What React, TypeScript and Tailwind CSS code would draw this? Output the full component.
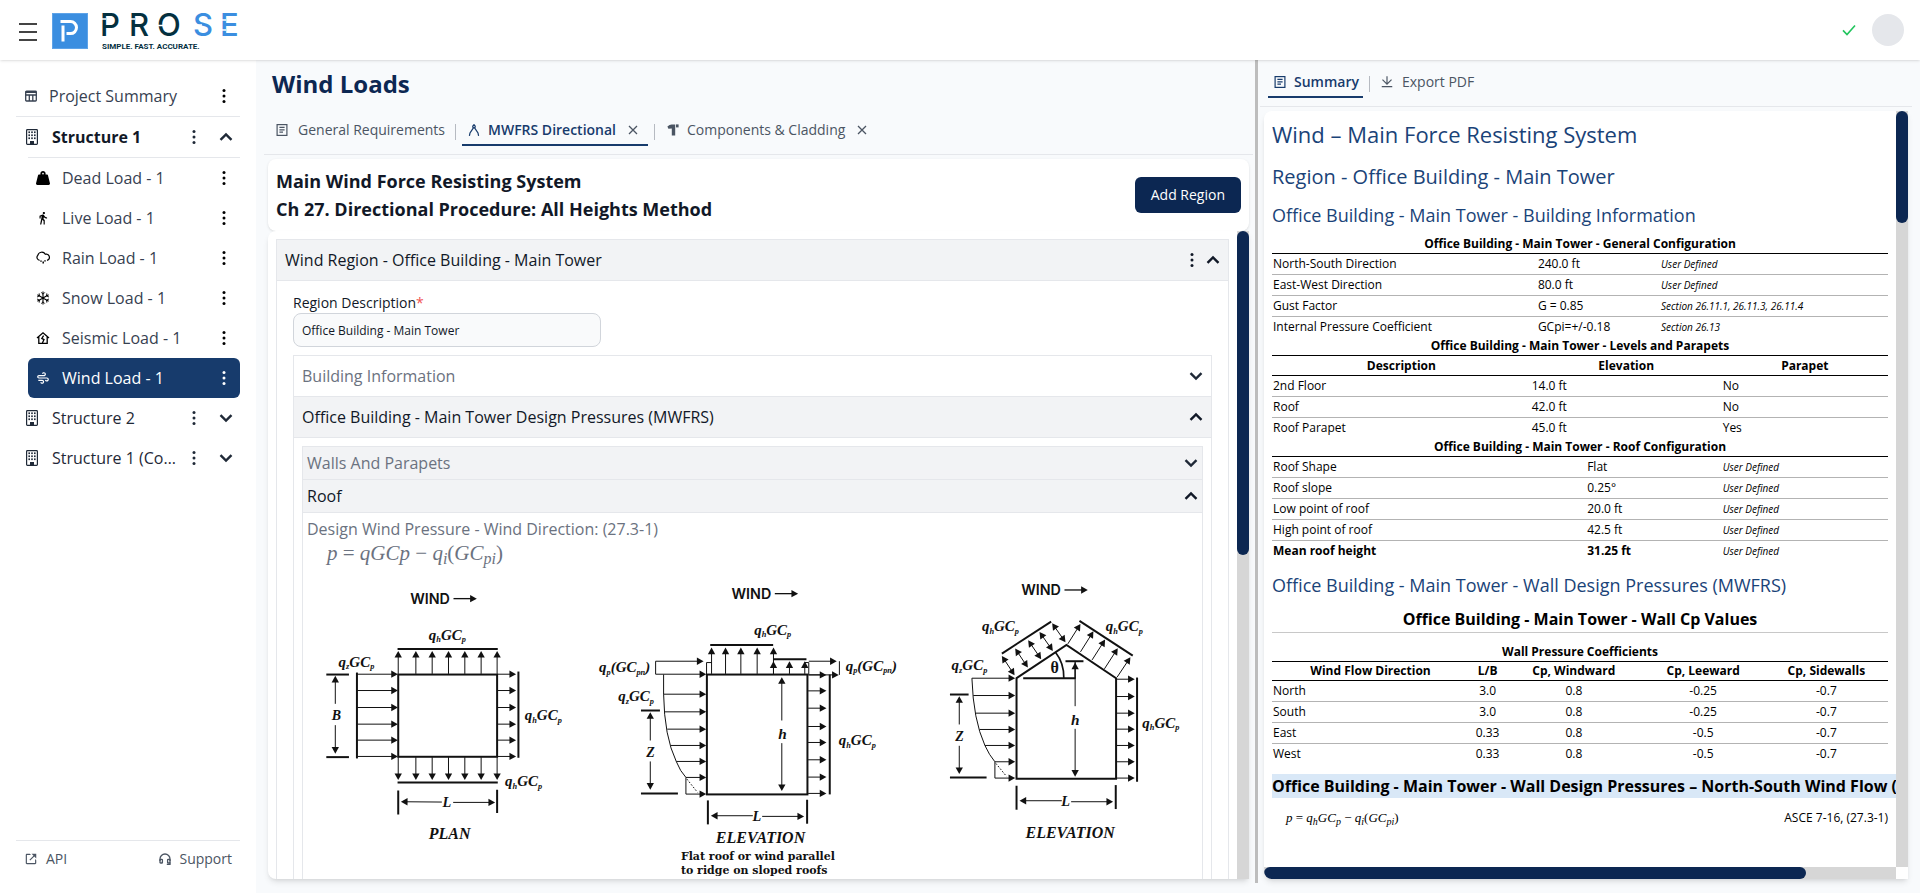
import React from "react";
import { FaWeightHanging } from "react-icons/fa";
import { MdDirectionsWalk } from "react-icons/md";
import { BiLinkExternal } from "react-icons/bi";
import { RiWindyLine, RiDownloadLine } from "react-icons/ri";

/* ---------- icons ---------- */

function Kebab({ className = "" }: { className?: string }) {
  return (
    <svg viewBox="0 0 4 16" className={"h-4 w-1 shrink-0 " + className} fill="currentColor">
      <circle cx="2" cy="2.5" r="1.5" />
      <circle cx="2" cy="8" r="1.5" />
      <circle cx="2" cy="13.5" r="1.5" />
    </svg>
  );
}

function Chevron({ up = false }: { up?: boolean }) {
  return (
    <svg viewBox="0 0 14 14" className="size-3.5 shrink-0" fill="none" stroke="currentColor" strokeWidth="2.4">
      <path d={up ? "M1.5 9.8 L7 4.4 L12.5 9.8" : "M1.5 4.2 L7 9.6 L12.5 4.2"} />
    </svg>
  );
}

function TableIcon() {
  return (
    <svg viewBox="0 0 12 12" className="size-3 shrink-0" fill="none" stroke="currentColor" strokeWidth="1.3">
      <rect x="0.7" y="1.2" width="10.6" height="9.8" rx="0.8" />
      <path d="M0.7 2 H11.3" strokeWidth="2" />
      <path d="M0.7 5 H11.3 M4.3 5 V11 M7.8 5 V11" />
    </svg>
  );
}

function BuildingIcon() {
  return (
    <svg viewBox="0 0 12 16" className="h-4 w-3 shrink-0" fill="currentColor">
      <rect x="0.6" y="0.6" width="10.8" height="14.8" rx="0.8" fill="none" stroke="currentColor" strokeWidth="1.2" />
      {[3, 6, 9].map((y) => [2.4, 5.2, 8].map((x) => <rect key={x + "-" + y} x={x} y={y - 0.6} width="1.6" height="1.7" />))}
      <rect x="4" y="12" width="4" height="3.6" />
    </svg>
  );
}

function RainIcon() {
  return (
    <svg viewBox="0 0 14 14" className="size-3.5 shrink-0" fill="none" stroke="currentColor" strokeWidth="1.2">
      <path d="M3.6 9.3 A2.9 2.9 0 0 1 1.8 4.4 A4.1 4.1 0 0 1 9.3 3.2 A3.2 3.2 0 0 1 11 9.4" />
      <path d="M5 9.4 v1.4 M7.2 10.6 v1.8 M9 9.2 v1.4" strokeWidth="1.5" />
    </svg>
  );
}

function SnowIcon() {
  return (
    <svg viewBox="0 0 14 14" className="size-3.5 shrink-0" fill="none" stroke="currentColor" strokeWidth="1.1">
      <path d="M7 0.6 V13.4 M1.4 3.8 L12.6 10.2 M12.6 3.8 L1.4 10.2" />
      <path d="M5.2 1.4 L7 3.2 L8.8 1.4 M5.2 12.6 L7 10.8 L8.8 12.6 M1 6 L3.4 5 L3.2 2.4 M13 8 L10.6 9 L10.8 11.6 M13 6 L10.6 5 L10.8 2.4 M1 8 L3.4 9 L3.2 11.6" strokeWidth="0.9" />
    </svg>
  );
}

function SeismicIcon() {
  return (
    <svg viewBox="0 0 14 14" className="size-3.5 shrink-0" fill="none" stroke="currentColor" strokeWidth="1.3">
      <path d="M1 7 L7 1.8 L13 7 M2.8 6 V12.3 H11.2 V6" />
      <path d="M7.6 4.6 L5.8 7.4 L8 8.6 L6.4 12" />
    </svg>
  );
}

function DocIcon() {
  return (
    <svg viewBox="0 0 12 12" className="size-3 shrink-0" fill="none" stroke="currentColor" strokeWidth="1.2">
      <rect x="1.1" y="0.6" width="9.8" height="10.8" />
      <path d="M3.4 3.4 H8.6 M3.4 5.8 H8.6 M3.4 8.2 H7" />
    </svg>
  );
}

function CompassIcon() {
  return (
    <svg viewBox="0 0 12 12" className="size-3 shrink-0" fill="none" stroke="currentColor" strokeWidth="1.2">
      <circle cx="6" cy="2.6" r="1.3" />
      <path d="M6 0 V1.3 M5.4 3.8 L2 9 L1.4 11.8 M6.6 3.8 L10 9 L10.6 11.8" />
    </svg>
  );
}

function CladdingIcon() {
  return (
    <svg viewBox="0 0 12 12" className="size-3 shrink-0" fill="currentColor">
      <path d="M0.4 2.6 Q2.6 0.4 4.6 0.4 H8.2 V11.6 H4.8 V4.4 L1.4 4.8 Z" />
      <path d="M9 0.4 H11.6 V3.4 H9 Z" />
    </svg>
  );
}

function HeadsetIcon() {
  return (
    <svg viewBox="0 0 12 12" className="size-3 shrink-0" fill="none" stroke="currentColor" strokeWidth="1.3">
      <path d="M1 8 V6 A5 5 0 0 1 11 6 V8" />
      <rect x="1" y="6.4" width="2.4" height="3.6" rx="0.6" />
      <rect x="8.6" y="6.4" width="2.4" height="3.6" rx="0.6" />
      <path d="M11 9.6 V11.4 H7.8" />
    </svg>
  );
}

function CloseIcon() {
  return (
    <svg viewBox="0 0 10 10" className="size-2.5" fill="none" stroke="currentColor" strokeWidth="1.3">
      <path d="M1 1 L9 9 M9 1 L1 9" />
    </svg>
  );
}

function Logo() {
  return (
    <svg viewBox="0 -8 200 54" className="h-[54px] w-[200px]" role="img" aria-label="PROSE">
      <rect x="0.5" y="0.5" width="35" height="35" fill="#3b8ee0" stroke="#5ea3e8" />
      <path d="M8.5 8.6 H18.5 A6 6 0 0 1 18.5 20.6 H14.5 M11 12.5 V28.5" fill="none" stroke="#fff" strokeWidth="3" />
      <g fontFamily="Inter, sans-serif" fontWeight="500" fontSize="31" stroke="none">
        <text x="48" y="23.2" fill="#04303f">P</text>
        <text x="77" y="23.2" fill="#04303f">R</text>
        <text x="105" y="23.2" fill="#04303f">O</text>
        <text x="141" y="23.2" fill="#3b8ee0">S</text>
        <text x="168" y="23.2" fill="#3b8ee0">E</text>
      </g>
      <path d="M49 6 h5 M78 6 h5 M105 12.5 h6 M142 12 h8 M169 7 h5 M169 17 h5" stroke="#fff" strokeWidth="1.6" />
      <text x="50" y="36" fill="#04303f" fontFamily="'Liberation Sans Narrow', 'Roboto', sans-serif" fontWeight="700" fontSize="8">
        SIMPLE. FAST. ACCURATE.
      </text>
    </svg>
  );
}

/* ---------- wind diagrams ---------- */

type P = [number, number];

function Arrow({ a, b, both = false, w = 3 }: { a: P; b: P; both?: boolean; w?: number }) {
  const len = Math.hypot(b[0] - a[0], b[1] - a[1]);
  const ux = (b[0] - a[0]) / len;
  const uy = (b[1] - a[1]) / len;
  const head = (p: P, s: number) =>
    [
      p,
      [p[0] - s * ux * 20 - uy * 11, p[1] - s * uy * 20 + ux * 11],
      [p[0] - s * ux * 20 + uy * 11, p[1] - s * uy * 20 - ux * 11],
    ]
      .map((q) => q.join(","))
      .join(" ");
  return (
    <g>
      <line
        x1={both ? a[0] + ux * 12 : a[0]}
        y1={both ? a[1] + uy * 12 : a[1]}
        x2={b[0] - ux * 12}
        y2={b[1] - uy * 12}
        stroke="#111"
        strokeWidth={w}
      />
      <polygon points={head(b, 1)} fill="#111" />
      {both && <polygon points={head(a, -1)} fill="#111" />}
    </g>
  );
}

function Bar({ a, b, w = 6 }: { a: P; b: P; w?: number }) {
  return <line x1={a[0]} y1={a[1]} x2={b[0]} y2={b[1]} stroke="#111" strokeWidth={w} />;
}

function Coef({ x, y, sub }: { x: number; y: number; sub: string }) {
  return (
    <text x={x} y={y} fontSize="45">
      q<tspan fontSize="25" dy="8">{sub}</tspan>
      <tspan dy="-8">GC</tspan>
      <tspan fontSize="25" dy="8">p</tspan>
    </text>
  );
}

function ParapetCoef({ x, y }: { x: number; y: number }) {
  return (
    <text x={x} y={y} fontSize="45">
      q<tspan fontSize="25" dy="8">p</tspan>
      <tspan dy="-8">(GC</tspan>
      <tspan fontSize="25" dy="8">pn</tspan>
      <tspan dy="-8">)</tspan>
    </text>
  );
}

function WindLabel({ x, y }: { x: number; y: number }) {
  return (
    <g>
      <text x={x} y={y} fontFamily="Inter, sans-serif" fontStyle="normal" fontWeight="600" fontSize="43">
        WIND
      </text>
      <Arrow a={[x + 130, y - 16]} b={[x + 200, y - 16]} w={4} />
    </g>
  );
}

function Figure({ viewBox, label, children }: { viewBox: string; label: string; children: React.ReactNode }) {
  return (
    <svg
      viewBox={viewBox}
      role="img"
      aria-label={label}
      className="w-full overflow-visible"
      fill="#111"
      fontFamily="'Liberation Serif', serif"
      fontStyle="italic"
      fontWeight="700"
    >
      {children}
    </svg>
  );
}

function PlanFigure() {
  return (
    <Figure viewBox="9 -3 900 960" label="Plan">
      <WindLabel x={331} y={102} />
      <rect x="295" y="314" width="297" height="247" fill="none" stroke="#111" strokeWidth="6" />
      {[295, 348, 397, 446, 495, 544, 592].map((x) => (
        <g key={x}>
          <Arrow a={[x, 312]} b={[x, 243]} />
          <Arrow a={[x, 562]} b={[x, 631]} />
        </g>
      ))}
      {[313, 362, 413, 463, 511, 560].map((y) => (
        <g key={y}>
          <Arrow a={[172, y]} b={[294, y]} />
          <Arrow a={[594, y]} b={[649, y]} />
        </g>
      ))}
      <Bar a={[293, 237]} b={[594, 237]} />
      <Bar a={[293, 638]} b={[594, 638]} />
      <Bar a={[171, 308]} b={[171, 566]} />
      <Bar a={[656, 305]} b={[656, 564]} />
      <Bar a={[79, 314]} b={[147, 314]} />
      <Bar a={[79, 562]} b={[147, 562]} />
      <Arrow a={[106, 402]} b={[106, 318]} />
      <Arrow a={[106, 466]} b={[106, 552]} />
      <Bar a={[295, 662]} b={[295, 734]} />
      <Bar a={[592, 660]} b={[592, 730]} />
      <Arrow a={[426, 697]} b={[303, 696]} />
      <Arrow a={[460, 698]} b={[586, 698]} />
      <text x="95" y="452" fontSize="42">B</text>
      <text x="428" y="712" fontSize="43">L</text>
      <Coef x={387} y={209} sub="h" />
      <Coef x={116} y={290} sub="z" />
      <Coef x={675} y={452} sub="h" />
      <Coef x={616} y={650} sub="h" />
      <text x="387" y="808" fontSize="48">PLAN</text>
    </Figure>
  );
}

function FlatRoofFigure() {
  return (
    <Figure viewBox="68 -3 900 960" label="Elevation, flat roof">
      <WindLabel x={454} y={87} />
      <rect x="380" y="314" width="302" height="360" fill="none" stroke="#111" strokeWidth="6" />
      {[394, 436, 482, 531, 580].map((x) => (
        <Arrow key={x} a={[x, 312]} b={[x, 233]} />
      ))}
      {[580, 628, 674].map((x) => (
        <Arrow key={x} a={[x, 312]} b={[x, 274]} />
      ))}
      <Bar a={[390, 225]} b={[579, 225]} />
      <Bar a={[579, 268]} b={[679, 268]} />
      <path d="M379 314 V278 H394 M686 314 V278 H674" fill="none" stroke="#111" strokeWidth="3" />
      <path d="M226 274 V313 M778 274 V315" fill="none" stroke="#111" strokeWidth="3" />
      <Arrow a={[226, 274]} b={[370, 274]} />
      <Arrow a={[226, 313]} b={[378, 313]} />
      <Arrow a={[686, 274]} b={[770, 274]} />
      <Arrow a={[686, 315]} b={[776, 315]} />
      {[[250, 373], [253, 426], [261, 478], [272, 527], [288, 575], [317, 623], [317, 673]].map(([x, y]) => (
        <Arrow key={y} a={[x, y]} b={[378, y]} />
      ))}
      {[315, 363, 415, 470, 518, 570, 622, 671].map((y) => (
        <Arrow key={y} a={[684, y]} b={[739, y]} />
      ))}
      <path d="M250 314 V373 Q252 500 288 575 Q300 605 317 623 V673" fill="none" stroke="#111" strokeWidth="3" />
      <path d="M320 628 L352 668" fill="none" stroke="#111" strokeWidth="3" strokeDasharray="5 5" />
      <Bar a={[749, 314]} b={[749, 674]} />
      <Bar a={[182, 422]} b={[239, 422]} />
      <Bar a={[182, 671]} b={[293, 671]} />
      <Arrow a={[210, 512]} b={[210, 427]} />
      <Arrow a={[210, 575]} b={[210, 660]} />
      <Arrow a={[605, 452]} b={[605, 322]} />
      <Arrow a={[605, 520]} b={[605, 664]} />
      <Bar a={[383, 692]} b={[383, 764]} />
      <Bar a={[681, 690]} b={[681, 762]} />
      <Arrow a={[518, 738]} b={[392, 738]} />
      <Arrow a={[546, 740]} b={[672, 740]} />
      <text x="198" y="561" fontSize="42">Z</text>
      <text x="594" y="509" fontSize="46">h</text>
      <text x="517" y="754" fontSize="43">L</text>
      <Coef x={522} y={194} sub="h" />
      <Coef x={114} y={394} sub="z" />
      <Coef x={776} y={526} sub="h" />
      <ParapetCoef x={56} y={307} />
      <ParapetCoef x={797} y={302} />
      <text x="407" y="820" fontSize="48">ELEVATION</text>
      <g fontStyle="normal" fontSize="33" fontFamily="'DejaVu Serif', serif">
        <text x="302" y="871">Flat roof or wind parallel</text>
        <text x="302" y="913">to ridge on sloped roofs</text>
      </g>
    </Figure>
  );
}

function GableRoofFigure() {
  const left: [P, P][] = [
    [[246, 258], [284, 316]],
    [[286, 236], [324, 293]],
    [[325, 211], [364, 268]],
    [[359, 186], [399, 243]],
    [[397, 160], [437, 217]],
  ];
  const right: [P, P][] = [
    [[444, 222], [482, 162]],
    [[482, 246], [521, 184]],
    [[517, 270], [556, 209]],
    [[554, 297], [594, 235]],
    [[592, 322], [632, 262]],
  ];
  return (
    <Figure viewBox="-54 -3 900 960" label="Elevation, gable roof">
      <WindLabel x={304} y={76} />
      <path d="M290 325 L440 225 L589 325 V627 H290 Z" fill="none" stroke="#111" strokeWidth="6" />
      {left.map(([a, b]) => (
        <Arrow key={a[0]} a={a} b={b} both />
      ))}
      {right.map(([a, b]) => (
        <Arrow key={a[0]} a={a} b={b} />
      ))}
      <Bar a={[246, 251]} b={[394, 155]} />
      <Bar a={[479, 153]} b={[639, 257]} />
      <Bar a={[310, 325]} b={[467, 325]} />
      <path d="M407 247 Q433 280 432 325" fill="none" stroke="#111" strokeWidth="5" />
      <Bar a={[437, 274]} b={[491, 274]} />
      <Arrow a={[466, 409]} b={[466, 278]} />
      <Arrow a={[466, 477]} b={[466, 621]} />
      <Bar a={[466, 274]} b={[466, 327]} w={4} />
      {[[156, 325], [160, 377], [168, 430], [179, 479], [195, 527], [225, 576], [225, 625]].map(([x, y]) => (
        <Arrow key={y} a={[x, y]} b={[286, y]} />
      ))}
      <path d="M156 325 Q160 450 195 527 Q208 556 225 576 V625" fill="none" stroke="#111" strokeWidth="3" />
      <path d="M228 581 L260 620" fill="none" stroke="#111" strokeWidth="3" strokeDasharray="5 5" />
      {[328, 380, 430, 478, 527, 576, 625].map((y) => (
        <Arrow key={y} a={[591, y]} b={[645, y]} />
      ))}
      <Bar a={[652, 323]} b={[652, 636]} />
      <Bar a={[90, 374]} b={[146, 374]} />
      <Bar a={[90, 623]} b={[200, 623]} />
      <Arrow a={[118, 464]} b={[118, 379]} />
      <Arrow a={[118, 528]} b={[118, 613]} />
      <Bar a={[290, 648]} b={[290, 720]} />
      <Bar a={[588, 646]} b={[588, 718]} />
      <Arrow a={[426, 693]} b={[299, 693]} />
      <Arrow a={[454, 696]} b={[580, 696]} />
      <text x="106" y="513" fontSize="42">Z</text>
      <text x="454" y="465" fontSize="46">h</text>
      <text x="424" y="710" fontSize="43">L</text>
      <text x="392" y="308" fontSize="48" fontStyle="normal">θ</text>
      <Coef x={186} y={184} sub="h" />
      <Coef x={558} y={184} sub="h" />
      <Coef x={95} y={300} sub="z" />
      <Coef x={668} y={474} sub="h" />
      <text x="317" y="805" fontSize="48">ELEVATION</text>
    </Figure>
  );
}

/* ---------- sidebar ---------- */

const loads = [
  { name: "Dead Load - 1", icon: <FaWeightHanging className="size-3.5" /> },
  { name: "Live Load - 1", icon: <MdDirectionsWalk className="size-3.5" /> },
  { name: "Rain Load - 1", icon: <RainIcon /> },
  { name: "Snow Load - 1", icon: <SnowIcon /> },
  { name: "Seismic Load - 1", icon: <SeismicIcon /> },
  { name: "Wind Load - 1", icon: <RiWindyLine className="size-3.5" />, active: true },
];

function StructureRow({ name, open = false }: { name: string; open?: boolean }) {
  return (
    <div className="flex h-10 items-center pr-[7px] pl-2.5 text-[#1f2937]">
      <BuildingIcon />
      <a href="#" className={"ml-3.5 min-w-0 flex-1 truncate " + (open ? "font-bold text-[#111827]" : "")}>
        {name}
      </a>
      <button aria-label={name + " options"} className="mr-[23px] ml-3">
        <Kebab />
      </button>
      <button aria-label={"Toggle " + name}>
        <Chevron up={open} />
      </button>
    </div>
  );
}

function Sidebar() {
  return (
    <aside className="flex w-64 shrink-0 flex-col bg-white px-4 pt-4 text-base text-[#374151]">
      <div className="flex h-[41px] items-center border-b border-[#e5e7eb] pr-3.5 pl-[9px]">
        <TableIcon />
        <a href="#" className="ml-3 flex-1">Project Summary</a>
        <button aria-label="Project Summary options" className="text-black"><Kebab /></button>
      </div>
      <StructureRow name="Structure 1" open />
      <ul className="ml-3 border-t border-[#e5e7eb]">
        {loads.map((l) => (
          <li
            key={l.name}
            className={
              "flex h-10 items-center rounded-md pr-3.5 pl-2 " + (l.active ? "bg-[#173b6c] font-medium text-white" : "")
            }
          >
            <span className={"flex w-3.5 justify-center " + (l.active ? "text-white" : "text-black")}>{l.icon}</span>
            <a href="#" className="ml-3 flex-1">{l.name}</a>
            <button aria-label={l.name + " options"} className={l.active ? "text-white" : "text-black"}>
              <Kebab />
            </button>
          </li>
        ))}
      </ul>
      <StructureRow name="Structure 2" />
      <StructureRow name="Structure 1 (Copy)" />
      <div className="mt-auto mb-6 flex items-center justify-between border-t border-[#e5e7eb] pt-2 pr-2 pl-2 text-sm text-[#4b5563]">
        <a href="#" className="flex items-center gap-2">
          <BiLinkExternal className="size-3.5" /> API
        </a>
        <a href="#" className="flex items-center gap-2">
          <HeadsetIcon /> Support
        </a>
      </div>
    </aside>
  );
}

/* ---------- centre panel ---------- */

function Separator() {
  return <span className="mb-1.5 h-4 w-px self-end bg-[#b6bac1]" />;
}

function MainPanel() {
  return (
    <main className="flex min-w-0 flex-[989] flex-col pr-0.5 pl-2">
      <h1 className="flex h-12 items-center px-2 text-2xl font-bold text-[#0c2752]">Wind Loads</h1>
      <nav className="flex gap-1.5 border-b border-[#e5e7eb] pb-2 pl-1.5 text-sm text-[#4b5563]">
        <button className="flex h-[38px] items-center gap-2.5 border-b-2 border-transparent pt-2 pr-1 pl-1.5">
          <DocIcon /> General Requirements
        </button>
        <Separator />
        <div className="flex h-[38px] items-center border-b-2 border-[#173b6c] px-1.5 pt-2 font-semibold text-[#173b6c]">
          <button className="flex items-center gap-2">
            <CompassIcon /> MWFRS Directional
          </button>
          <button aria-label="Close MWFRS Directional" className="ml-2 p-1 text-[#4b5563]"><CloseIcon /></button>
        </div>
        <Separator />
        <div className="flex h-[38px] items-center border-b-2 border-transparent px-1.5 pt-2">
          <button className="flex items-center gap-2">
            <CladdingIcon /> Components &amp; Cladding
          </button>
          <button aria-label="Close Components and Cladding" className="ml-2 p-1"><CloseIcon /></button>
        </div>
      </nav>

      <section className="mx-1 mt-1 flex items-center justify-between rounded-lg bg-white p-2 shadow-sm">
        <h2 className="text-lg/7 font-bold text-[#111827]">
          Main Wind Force Resisting System
          <br />
          Ch 27. Directional Procedure: All Heights Method
        </h2>
        <button className="h-9 rounded-md bg-[#0c2752] px-4 text-sm font-medium text-white">Add Region</button>
      </section>

      <section className="mx-1 mb-3.5 flex min-h-0 flex-1 overflow-hidden rounded-lg rounded-r-none bg-white shadow-md">
        <div className="min-w-0 flex-1 overflow-hidden px-2 pt-2 text-base">
          <div className="border border-b-0 border-[#e5e7eb] text-[#111827]">
            <div className="flex h-[41px] items-center border-b border-[#e5e7eb] bg-[#f2f3f5] px-2">
              <h3 className="flex-1 font-medium">Wind Region - Office Building - Main Tower</h3>
              <button aria-label="Region options" className="mr-3"><Kebab /></button>
              <button aria-label="Toggle region"><Chevron up /></button>
            </div>
            <div className="px-4 pt-3">
              <label htmlFor="region" className="block text-sm/5 font-medium">
                Region Description<span className="text-[#f05252]">*</span>
              </label>
              <input
                id="region"
                defaultValue="Office Building - Main Tower"
                className="h-[34px] w-[308px] rounded-lg border border-[#d1d5db] bg-[#f9fafb] px-2 text-xs"
              />
              <div className="mt-2 border border-b-0 border-[#e5e7eb]">
                <button className="flex h-[41px] w-full items-center justify-between border-b border-[#e5e7eb] px-2 font-medium text-[#6b7280]">
                  Building Information <span className="text-[#1f2937]"><Chevron /></span>
                </button>
                <button className="flex h-[41px] w-full items-center justify-between border-b border-[#e5e7eb] bg-[#f2f3f5] px-2 font-medium">
                  Office Building - Main Tower Design Pressures (MWFRS) <Chevron up />
                </button>
                <div className="px-2 pt-2">
                  <div className="border border-b-0 border-[#e5e7eb]">
                    <button className="flex h-[33px] w-full items-center justify-between border-b border-[#e5e7eb] bg-[#f2f3f5] px-1 font-medium text-[#6b7280]">
                      Walls And Parapets <span className="text-[#1f2937]"><Chevron /></span>
                    </button>
                    <button className="flex h-[33px] w-full items-center justify-between border-b border-[#e5e7eb] bg-[#f2f3f5] px-1 font-medium">
                      Roof <Chevron up />
                    </button>
                    <div className="px-1 pt-1 text-base/6 text-[#6b7280]">
                      <p>Design Wind Pressure - Wind Direction: (27.3-1)</p>
                      <p className="h-6 pl-5 font-['Liberation_Serif',serif] text-[21px]/6">
                        <i>p</i> = <i>qGCp</i> − <i>q</i><sub className="text-base/4"><i>i</i></sub>(<i>GC</i>
                        <sub className="text-base/4"><i>pi</i></sub>)
                      </p>
                    </div>
                    <div className="mt-1 grid grid-cols-3">
                      <PlanFigure />
                      <FlatRoofFigure />
                      <GableRoofFigure />
                    </div>
                  </div>
                </div>
              </div>
            </div>
          </div>
        </div>
        <div className="w-3 shrink-0 bg-[#d6d6d6]">
          <div className="h-1/2 rounded-full bg-[#0c2752]" />
        </div>
      </section>
    </main>
  );
}

/* ---------- report panel ---------- */

const line = "h-[21px] border-b border-[#b3b3b3] ";
const last = "h-5 ";
const rule = "border-b border-black ";

function Caption({ children }: { children: React.ReactNode }) {
  return <caption className="h-[19px] border-b border-black text-center text-xs/[18px] font-bold">{children}</caption>;
}

function PropertyTable({ title, rows, widths }: { title: string; rows: string[][]; widths: [string, string] }) {
  return (
    <table className="w-full border-separate border-spacing-0 text-left text-xs">
      <Caption>{title}</Caption>
      <tbody>
        {rows.map((r, i) => {
          const b = i < rows.length - 1 ? line : last;
          const bold = r[0] === "Mean roof height" ? "font-bold " : "";
          return (
            <tr key={r[0]}>
              <td className={b + bold + "px-px " + widths[0]}>{r[0]}</td>
              <td className={b + bold + "px-px " + widths[1]}>{r[1]}</td>
              <td className={b + "px-px text-[10px]/4 italic"}>{r[2]}</td>
            </tr>
          );
        })}
      </tbody>
    </table>
  );
}

const levels = [
  ["2nd Floor", "14.0 ft", "No"],
  ["Roof", "42.0 ft", "No"],
  ["Roof Parapet", "45.0 ft", "Yes"],
];

const coefficients = [
  ["North", "3.0", "0.8", "-0.25", "-0.7"],
  ["South", "3.0", "0.8", "-0.25", "-0.7"],
  ["East", "0.33", "0.8", "-0.5", "-0.7"],
  ["West", "0.33", "0.8", "-0.5", "-0.7"],
];

function ReportPanel() {
  return (
    <section className="flex min-w-0 flex-[652] flex-col pr-2 pl-0.5">
      <nav className="flex gap-1.5 border-b border-[#e5e7eb] pb-2 pl-2 text-sm text-[#4b5563]">
        <button className="flex h-[38px] items-center gap-2 border-b-2 border-[#173b6c] pt-2 pr-1 pl-1.5 font-semibold text-[#173b6c]">
          <DocIcon /> Summary
        </button>
        <Separator />
        <button className="flex h-[38px] items-center gap-2 border-b-2 border-transparent px-1 pt-2">
          <RiDownloadLine className="size-3.5" /> Export PDF
        </button>
      </nav>

      <div className="mx-1 mt-1 mb-3.5 flex min-h-0 flex-1 flex-col overflow-hidden rounded-tl-lg rounded-bl-lg bg-white shadow-md">
        <div className="flex min-h-0 flex-1">
          <article className="min-w-0 flex-1 overflow-hidden pl-2 text-black">
            <div className="pr-2">
              <h2 className="mt-1.5 text-[22px]/[34px] text-[#1a4378]">Wind – Main Force Resisting System</h2>
              <h3 className="mt-2.5 text-xl/8 text-[#1a4378]">Region - Office Building - Main Tower</h3>
              <h4 className="mt-2 mb-1.5 text-lg/7 text-[#1a4378]">Office Building - Main Tower - Building Information</h4>

              <PropertyTable
                title="Office Building - Main Tower - General Configuration"
                widths={["w-[43%]", "w-[20%]"]}
                rows={[
                  ["North-South Direction", "240.0 ft", "User Defined"],
                  ["East-West Direction", "80.0 ft", "User Defined"],
                  ["Gust Factor", "G = 0.85", "Section 26.11.1, 26.11.3, 26.11.4"],
                  ["Internal Pressure Coefficient", "GCpi=+/-0.18", "Section 26.13"],
                ]}
              />

              <table className="w-full border-separate border-spacing-0 text-left text-xs">
                <Caption>Office Building - Main Tower - Levels and Parapets</Caption>
                <thead>
                  <tr className="text-center">
                    <th className={rule + "h-5 w-[42%]"}>Description</th>
                    <th className={rule + "h-5 w-[31%]"}>Elevation</th>
                    <th className={rule + "h-5"}>Parapet</th>
                  </tr>
                </thead>
                <tbody>
                  {levels.map((r, i) => (
                    <tr key={r[0]}>
                      {r.map((c, j) => (
                        <td key={j} className={(i < 2 ? line : last) + "px-px"}>{c}</td>
                      ))}
                    </tr>
                  ))}
                </tbody>
              </table>

              <PropertyTable
                title="Office Building - Main Tower - Roof Configuration"
                widths={["w-[51%]", "w-[22%]"]}
                rows={[
                  ["Roof Shape", "Flat", "User Defined"],
                  ["Roof slope", "0.25°", "User Defined"],
                  ["Low point of roof", "20.0 ft", "User Defined"],
                  ["High point of roof", "42.5 ft", "User Defined"],
                  ["Mean roof height", "31.25 ft", "User Defined"],
                ]}
              />

              <h4 className="mt-2.5 text-lg/7 text-[#1a4378]">
                Office Building - Main Tower - Wall Design Pressures (MWFRS)
              </h4>
              <h5 className="mt-2 mb-2.5 border-b border-[#c8c8c8] text-center text-base/[25px] font-bold">
                Office Building - Main Tower - Wall Cp Values
              </h5>

              <table className="w-full border-separate border-spacing-0 text-center text-xs">
                <Caption>Wall Pressure Coefficients</Caption>
                <thead>
                  <tr>
                    <th className={rule + "h-[19px] w-[32%]"}>Wind Flow Direction</th>
                    <th className={rule + "h-[19px] w-[6%]"}>L/B</th>
                    <th className={rule + "h-[19px] w-[22%]"}>Cp, Windward</th>
                    <th className={rule + "h-[19px] w-[20%]"}>Cp, Leeward</th>
                    <th className={rule + "h-[19px] w-[20%]"}>Cp, Sidewalls</th>
                  </tr>
                </thead>
                <tbody>
                  {coefficients.map((r, i) => (
                    <tr key={r[0]}>
                      {r.map((c, j) => (
                        <td key={j} className={(i < 3 ? line : last) + "px-px " + (j === 0 ? "text-left" : "")}>
                          {c}
                        </td>
                      ))}
                    </tr>
                  ))}
                </tbody>
              </table>
            </div>

            <h5 className="mt-2.5 overflow-hidden bg-[#d9e8f7] text-base/6 font-bold whitespace-nowrap">
              Office Building - Main Tower - Wall Design Pressures – North-South Wind Flow (MWFRS)
            </h5>
            <div className="mt-2 flex h-6 items-center justify-between pr-2 pl-3.5">
              <p className="font-['Liberation_Serif',serif] text-[13px]/6">
                <i>p</i> = <i>q<sub className="text-[10px]">h</sub>GC<sub className="text-[10px]">p</sub></i> −{" "}
                <i>q<sub className="text-[10px]">i</sub></i>(<i>GC<sub className="text-[10px]">pi</sub></i>)
              </p>
              <p className="text-xs">ASCE 7-16, (27.3-1)</p>
            </div>
          </article>
          <div className="w-3 shrink-0 bg-[#d6d6d6]">
            <div className="h-28 rounded-full bg-[#0c2752]" />
          </div>
        </div>
        <div className="flex h-3 shrink-0">
          <div className="flex-1 bg-[#d6d6d6]">
            <div className="h-3 w-6/7 rounded-full bg-[#0c2752]" />
          </div>
          <div className="w-3" />
        </div>
      </div>
    </section>
  );
}

export default function App() {
  return (
    <div className="flex h-screen flex-col overflow-hidden bg-[#f8fafc] font-['Open_Sans',sans-serif]">
      <header className="z-10 flex h-[60px] shrink-0 items-center bg-white pr-4 pl-[19px] shadow-sm">
        <button aria-label="Menu" className="mr-[15px] flex flex-col gap-1.5 pt-1 text-[#444]">
          <span className="h-0.5 w-[18px] bg-current" />
          <span className="h-0.5 w-[18px] bg-current" />
          <span className="h-0.5 w-[18px] bg-current" />
        </button>
        <a href="#" className="pt-1"><Logo /></a>
        <svg viewBox="0 0 14 12" className="mr-4 ml-auto h-3 w-3.5" fill="none" stroke="#22c55e" strokeWidth="1.6">
          <path d="M1 6.4 L5 10.6 L13 1.4" />
        </svg>
        <button aria-label="Account" className="size-8 rounded-full bg-[#e5e7eb]" />
      </header>
      <div className="flex min-h-0 flex-1">
        <Sidebar />
        <MainPanel />
        <div className="mb-2.5 w-[3px] shrink-0 bg-[#bdbdbd]" />
        <ReportPanel />
      </div>
    </div>
  );
}
